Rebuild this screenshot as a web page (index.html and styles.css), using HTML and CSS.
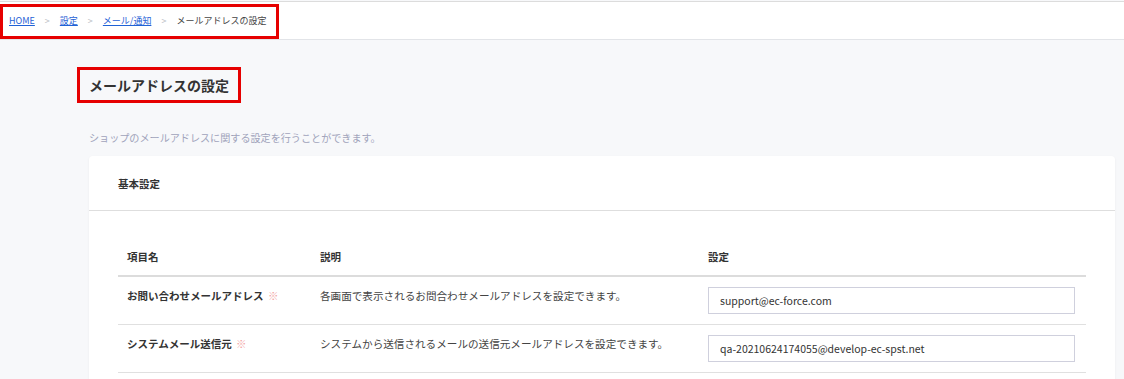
FILE: index.html
```html
<!DOCTYPE html>
<html lang="ja">
<head>
<meta charset="utf-8">
<title>メールアドレスの設定</title>
<link rel="stylesheet" href="styles.css">
</head>
<body>
<header class="topbar">
  <nav class="breadcrumb">
    <a href="#" class="crumb-link">HOME</a>
    <span class="sep">&gt;</span>
    <a href="#" class="crumb-link">設定</a>
    <span class="sep">&gt;</span>
    <a href="#" class="crumb-link">メール/通知</a>
    <span class="sep">&gt;</span>
    <span class="crumb-current">メールアドレスの設定</span>
  </nav>
</header>
<main class="content">
  <h1 class="page-title">メールアドレスの設定</h1>
  <p class="page-desc">ショップのメールアドレスに関する設定を行うことができます。</p>
  <section class="card">
    <div class="card-header">基本設定</div>
    <div class="card-body">
      <table class="settings">
        <colgroup>
          <col class="c1"><col class="c2"><col class="c3">
        </colgroup>
        <thead>
          <tr><th>項目名</th><th>説明</th><th>設定</th></tr>
        </thead>
        <tbody>
          <tr>
            <td class="label">お問い合わせメールアドレス <span class="req">※</span></td>
            <td class="desc">各画面で表示されるお問合わせメールアドレスを設定できます。</td>
            <td class="field"><input class="text-input" type="text" value="support@ec-force.com"></td>
          </tr>
          <tr>
            <td class="label">システムメール送信元 <span class="req">※</span></td>
            <td class="desc">システムから送信されるメールの送信元メールアドレスを設定できます。</td>
            <td class="field"><input class="text-input" type="text" value="qa-20210624174055@develop-ec-spst.net"></td>
          </tr>
        </tbody>
      </table>
    </div>
  </section>
</main>
</body>
</html>
```
FILE: styles.css
```css
* { box-sizing: border-box; }
html, body { margin: 0; padding: 0; }
body {
  background: #f7f8fa;
  font-family: "Noto Sans CJK JP", "Noto Sans", sans-serif;
  color: #333;
  overflow: hidden;
}
.topbar {
  margin-top: 1px;
  border-top: 1px solid #dcdcdc;
  border-bottom: 1px solid #e2e4e8;
  background: #fff;
  height: 39px;
  padding-top: 2px;
}
.breadcrumb {
  display: inline-flex;
  align-items: center;
  height: 35px;
  border: 3px solid #e60000;
  padding: 0 10px 2px 6px;
  font-size: 9px;
}
.crumb-link { color: #1f62d6; text-decoration: underline; }
.sep { color: #b9bcc4; margin: 0 10px; }
.crumb-current { color: #444; }
.content { padding: 0 9px 0 89px; }
.page-title {
  display: inline-block;
  margin: 27px 0 0 -12px;
  padding: 5px 9px;
  border: 3px solid #e60000;
  font-size: 14px;
  line-height: 20px;
  font-weight: 700;
  color: #333;
}
.page-desc {
  margin: 28px 0 11px;
  font-size: 10.1px;
  line-height: 14px;
  color: #a0a3bb;
}
.card {
  background: #fff;
  border-radius: 4px;
  box-shadow: 0 1px 3px rgba(0, 0, 0, 0.05);
  height: 240px;
}
.card-header {
  height: 55px;
  padding: 21px 29px 0;
  font-size: 10.5px;
  line-height: 14px;
  font-weight: 700;
  border-bottom: 1px solid #dedede;
}
.card-body { padding: 27px 29px 0; }
.settings {
  width: 100%;
  border-collapse: collapse;
  table-layout: fixed;
  font-size: 10.5px;
  line-height: 14px;
}
.c1 { width: 193px; }
.c2 { width: 388px; }
.settings th {
  text-align: left;
  font-weight: 700;
  padding: 12px 9px 11px;
  border-bottom: 2px solid #dcdcdc;
  color: #333;
}
.settings td {
  vertical-align: top;
  padding: 12px 9px 0;
  height: 48px;
  border-bottom: 1px solid #e0e0e0;
}
.settings td.label { font-weight: 700; color: #333; }
.settings td.desc { color: #444; font-size: 10.6px; }
.req { color: #f2a1a1; font-weight: 400; margin-left: 2px; }
.settings td.field { padding: 10px 11px 0 9px; }
.text-input {
  display: block;
  width: 100%;
  height: 27px;
  border: 1px solid #cfd0dd;
  border-radius: 0;
  padding: 0 11px;
  font-family: "Noto Sans CJK JP", "Noto Sans", sans-serif;
  font-size: 10.5px;
  color: #333;
  background: #fff;
  outline: none;
}
```
